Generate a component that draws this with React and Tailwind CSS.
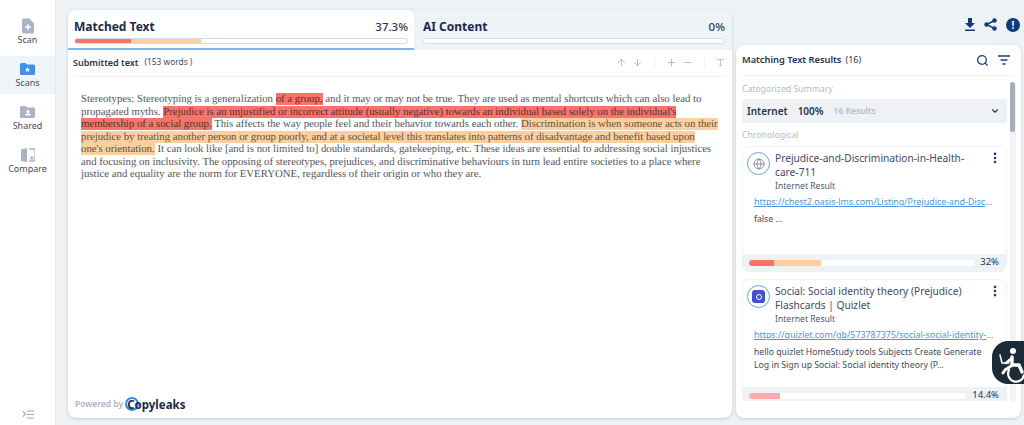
import React from "react";
import { Search, ChevronDown, ArrowUp, ArrowDown, Plus, Minus, Type, EllipsisVertical, Globe } from "lucide-react";

const Nav = ({ label, active, children }) => (
  <div className={`h-[38px] flex flex-col items-center justify-center ${active ? "bg-[#eff4f8]" : ""}`}>
    <div className="h-[16px] flex items-center justify-center">{children}</div>
    <span className="text-[9px] leading-[12px] text-[#3f4a63]">{label}</span>
  </div>
);

const Doc = () => (
  <svg width="12" height="16" viewBox="0 0 13 16"><path d="M0 2a2 2 0 0 1 2-2h6l5 5v9a2 2 0 0 1-2 2H2a2 2 0 0 1-2-2z" fill="#aab4c6" /><path d="M6.500 6v6M3.500 9h6" stroke="#fff" strokeWidth="1.600" /></svg>
);
const Folder = ({ color, children }) => (
  <svg width="15" height="12" viewBox="0 0 15 12"><path d="M0 1.500A1.500 1.500 0 0 1 1.500 0h4l1.500 1.500h6.500A1.500 1.500 0 0 1 15 3v7.500a1.500 1.500 0 0 1-1.500 1.500h-12A1.500 1.500 0 0 1 0 10.500z" fill={color} />{children}</svg>
);
const Compare = () => (
  <svg width="14" height="16" viewBox="0 0 14 16"><path d="M0 2.500 6 1v14l-6-1z" fill="#aab4c6" /><path d="M8 2h5a1 1 0 0 1 1 1v10a1 1 0 0 1-1 1H8" fill="none" stroke="#aab4c6" strokeWidth="1.300" /><path d="M8.500 12.500l2.500-4 2 4z" fill="#aab4c6" /></svg>
);

const Bar = ({ red = 0, orange = 0, pink = 0 }) => (
  <div className="flex-1 h-[6px] rounded-full bg-white overflow-hidden flex">
    <div className="bg-[#f8736a]" style={{ width: `${red}%` }} />
    <div className="bg-[#fdcf9f]" style={{ width: `${orange}%` }} />
    <div className="bg-[#fcabab]" style={{ width: `${pink}%` }} />
  </div>
);

const TabBar = ({ red = 0, orange = 0 }) => (
  <div className="h-[6px] rounded-full border border-[#d5dce6] bg-white overflow-hidden flex">
    <div className="bg-[#f8736a]" style={{ width: `${red}%` }} />
    <div className="bg-[#fdcf9f]" style={{ width: `${orange}%` }} />
  </div>
);

const Card = ({ icon, title, url, body, bar }) => (
  <div className="shrink-0 h-[126px] rounded-[7px] border border-[#eef2f5] flex flex-col overflow-hidden">
    <div className="flex-1 relative pl-[4px] pr-[2px] pt-[4px]">
      <div className="flex gap-[5px]">
        <div className="w-[23px] h-[23px] rounded-full border border-[#5ea3ea] flex items-center justify-center mt-[1px] shrink-0">{icon}</div>
        <div className="pr-[24px] pt-[1px]">
          <div className="text-[10.200px] leading-[13.500px] text-[#3f4a63]">{title}</div>
          <div className="text-[8.600px] leading-[14px] text-[#4d5870]">Internet Result</div>
        </div>
      </div>
      <EllipsisVertical size={14} strokeWidth={2.600} className="absolute right-[4px] top-[4px] text-[#1c3d7c]" />
      <div className="mt-[2px] ml-[7px] mr-[9px] text-[8.900px] leading-[13px] text-[#4b95e6] underline truncate">{url}</div>
      <div className="mt-[5px] ml-[7px] mr-[12px] text-[8.700px] leading-[12.500px] text-[#3f4a5c]">{body}</div>
    </div>
    {bar}
  </div>
);

export default function App() {
  return (
    <div className="w-[1024px] h-[425px] overflow-hidden flex bg-[#eef2f5] relative" style={{ fontFamily: '"Noto Sans", Inter, sans-serif' }}>
      <aside className="w-[56px] shrink-0 bg-white flex flex-col pt-[12px] border-r border-[#e5eaee]">
        <div className="h-px" />
        <Nav label="Scan"><Doc /></Nav>
        <div className="h-[5px]" />
        <Nav label="Scans" active>
          <Folder color="#3d91ec"><path d="M7.500 4l.8 1.700 1.800.2-1.300 1.200.4 1.800-1.700-.9-1.700.9.4-1.800-1.300-1.200 1.800-.2z" fill="#fff" /></Folder>
        </Nav>
        <div className="h-[5px]" />
        <Nav label="Shared">
          <Folder color="#aab4c6"><circle cx="8" cy="5.500" r="1.500" fill="#fff" /><path d="M5 9.500c0-3 6-3 6 0z" fill="#fff" /></Folder>
        </Nav>
        <div className="h-[5px]" />
        <Nav label="Compare"><Compare /></Nav>
        <div className="mt-auto mb-[6px] flex justify-center text-[#9aa5b8]">
          <svg width="12" height="9" viewBox="0 0 12 9" fill="none" stroke="currentColor" strokeWidth="1.100"><path d="M1 1.500 3.500 4 1 6.500M5 1h7M5 4.500h7M5 8h7" /></svg>
        </div>
      </aside>

      <main className="w-[664px] shrink-0 ml-[12px] mt-[10px] mb-[7px] rounded-[8px] bg-white shadow-[0_1px_3px_rgba(120,135,150,0.35)] flex flex-col overflow-hidden">
        <div className="flex h-[40px] shrink-0 bg-[#eef3f6]">
          <div className="w-[346px] bg-white rounded-t-[8px] border-b-2 border-[#7db7ec] px-[6px] pt-[9px]">
            <div className="flex justify-between items-center h-[15px] text-[#1b2a4a]">
              <span className="text-[12px] font-bold">Matched Text</span>
              <span className="text-[11.500px] font-medium text-[#2b3a58]">37.3%</span>
            </div>
            <div className="mt-[4px]"><TabBar red={16.900} orange={21} /></div>
          </div>
          <div className="flex-1 px-[9px] pt-[9px] pr-[7px]">
            <div className="flex justify-between items-center h-[15px] text-[#1b2a4a]">
              <span className="text-[12px] font-bold">AI Content</span>
              <span className="text-[11.500px] font-medium text-[#2b3a58]">0%</span>
            </div>
            <div className="mt-[4px]"><TabBar /></div>
          </div>
        </div>

        <div className="h-[27px] shrink-0 ml-[5px] mr-[6px] flex items-center border-b border-[#f1f4f7] pb-[1px]">
          <span className="text-[9px] font-semibold text-[#27334f]">Submitted text</span>
          <span className="text-[8.400px] text-[#3f4a63] ml-[6px]">(153 words )</span>
          <div className="ml-auto flex items-center text-[#aeb7c6]">
            <ArrowUp size={11} />
            <ArrowDown size={11} className="ml-[5px]" />
            <span className="w-px h-[11px] bg-[#eef1f4] ml-[11px]" />
            <Plus size={11} className="ml-[11px]" />
            <Minus size={11} className="ml-[5px]" />
            <span className="w-px h-[11px] bg-[#eef1f4] ml-[11px]" />
            <Type size={9} className="ml-[11px] mr-[1px]" />
          </div>
        </div>

        <div className="pl-[13px] pr-[13.500px] pt-[16px] text-[10.780px] leading-[12.500px] text-[#50555c] [text-rendering:geometricPrecision]" style={{ fontFamily: '"Liberation Serif", serif' }}>
          Stereotypes: Stereotyping is a generalization <span className="bg-[#f8736a] text-[#5a2f2c]">of a group,</span> and it may or may not be true. They are used as mental shortcuts which can also lead to propagated myths. <span className="bg-[#f8736a] text-[#5a2f2c]">Prejudice is an unjustified or incorrect attitude (usually negative) towards an individual based solely on the individual's membership of a social group.</span> This affects the way people feel and their behavior towards each other. <span className="bg-[#fdcf9f] text-[#5c5040]">Discrimination is when someone acts on their prejudice by treating another person or group poorly, and at a societal level this translates into patterns of disadvantage and benefit based upon one's orientation.</span> It can look like [and is not limited to] double standards, gatekeeping, etc. These ideas are essential to addressing social injustices and focusing on inclusivity. The opposing of stereotypes, prejudices, and discriminative behaviours in turn lead entire societies to a place where justice and equality are the norm for EVERYONE, regardless of their origin or who they are.
        </div>

        <div className="mt-auto mb-[5px] ml-[7px] flex items-center">
          <span className="text-[8.500px] font-semibold text-[#aab4c6]">Powered by</span>
          <span className="relative ml-[2px] text-[11.500px] font-bold text-[#1b2a4a] pl-[2px]">
            <span className="absolute left-0 top-[1px] w-[14px] h-[14px] rounded-full border-[2.500px] border-[#2f8dee]" />
            <span className="relative">Copyleaks</span>
          </span>
        </div>
      </main>

      <div className="w-[285px] shrink-0 ml-[4px] flex flex-col">
        <div className="h-[45px] shrink-0 flex items-start justify-end pt-[18px] pr-[1px] text-[#0f3a80]">
          <svg width="12" height="13" viewBox="0 0 12 13" fill="currentColor"><path d="M4 0h4v5h3L6 10 1 5h3zM1 11.500h10V13H1z" /></svg>
          <svg width="13" height="13" viewBox="0 0 13 13" className="ml-[8px]"><path d="M10.500 2.500 2.500 6.500l8 4" fill="none" stroke="currentColor" strokeWidth="1.400" /><circle cx="10.500" cy="2.500" r="2.200" fill="currentColor" /><circle cx="2.500" cy="6.500" r="2.200" fill="currentColor" /><circle cx="10.500" cy="10.500" r="2.200" fill="currentColor" /></svg>
          <span className="ml-[9px] w-[14px] h-[14px] rounded-full bg-[#0f3a80] text-white text-[10px] font-bold flex items-center justify-center">!</span>
        </div>
        <section className="h-[373px] mb-[7px] rounded-[8px] bg-white shadow-[0_1px_3px_rgba(120,135,150,0.35)] px-[6px] flex flex-col overflow-hidden relative">
          <div className="h-[31px] shrink-0 flex items-center border-b border-[#f1f4f7] text-[#27334f]">
            <span className="text-[9.300px] font-semibold">Matching Text Results</span>
            <span className="text-[9px] ml-[4px]">(16)</span>
            <Search size={13} strokeWidth={2.400} className="ml-auto text-[#1c3d7c]" />
            <svg width="14" height="10" viewBox="0 0 14 10" fill="none" stroke="#1c3d7c" strokeWidth="1.300" className="ml-[8px] mr-[4px]"><path d="M1 1h12M3.500 5h7M5.500 9h3" /></svg>
          </div>
          <div className="flex-1 min-h-0 flex gap-[3px]">
            <div className="w-[265px] shrink-0 flex flex-col">
              <div className="text-[8.700px] leading-[12px] text-[#b3bcc9] mt-[7px]">Categorized Summary</div>
              <div className="h-[24px] shrink-0 mt-[4px] rounded-[3px] bg-[#eef2f5] flex items-center pl-[5px] pr-[7px]">
                <span className="text-[10px] font-semibold text-[#27334f]">Internet</span>
                <span className="text-[10px] font-semibold text-[#27334f] ml-[10px]">100%</span>
                <span className="text-[8.500px] font-semibold text-[#b3bcc9] ml-[10px]">16 Results</span>
                <ChevronDown size={10} strokeWidth={2.600} className="ml-auto text-[#27334f]" />
              </div>
              <div className="text-[8.700px] leading-[12px] text-[#b3bcc9] mt-[6px]">Chronological</div>
              <div className="mt-[5px] flex flex-col gap-[7px] h-[255px] overflow-hidden">
                <Card
                  icon={<Globe size={12} className="text-[#8a93a3]" />}
                  title="Prejudice-and-Discrimination-in-Health-care-711"
                  url="https://chest2.oasis-lms.com/Listing/Prejudice-and-Discrimination-in-Health"
                  body="false ..."
                  bar={
                    <div className="h-[17px] shrink-0 bg-[#eef2f5] flex items-center pl-[6px] pr-[7px]">
                      <Bar red={11} orange={21} />
                      <span className="ml-[6px] text-[9.500px] text-[#27334f]">32%</span>
                    </div>
                  }
                />
                <Card
                  icon={<span className="w-[13px] h-[13px] rounded-[3px] bg-[#3f51d6] flex items-center justify-center"><span className="w-[6px] h-[6px] rounded-full border-[1.500px] border-white" /></span>}
                  title="Social: Social identity theory (Prejudice) Flashcards | Quizlet"
                  url="https://quizlet.com/gb/573787375/social-social-identity-theory-prejudice"
                  body="hello quizlet HomeStudy tools Subjects Create Generate Log in Sign up Social: Social identity theory (P..."
                  bar={
                    <div className="h-[17px] shrink-0 bg-[#eef2f5] flex items-center pl-[6px] pr-[7px]">
                      <Bar pink={14.400} />
                      <span className="ml-[6px] text-[9.500px] text-[#27334f]">14.4%</span>
                    </div>
                  }
                />
              </div>
            </div>
            <div className="w-[6px] h-[320px] mt-[6px] rounded-full bg-[#f1f4f7] shrink-0">
              <div className="w-[5px] h-[50px] rounded-full bg-[#a3adbc]" />
            </div>
          </div>
        </section>
      </div>

      <div className="absolute right-0 top-[341px] w-[32px] h-[43px] rounded-l-[16px] bg-[#1b2b38] text-white">
        <svg width="32" height="43" viewBox="0 0 32 43" fill="none" stroke="currentColor" strokeLinecap="round" strokeLinejoin="round">
          <circle cx="21" cy="10" r="3" fill="currentColor" stroke="none" />
          <path d="M20 16v8h7l3 7" strokeWidth="3.400" />
          <path d="M20 17l-6 5" strokeWidth="2.600" />
          <path d="M8 14l2 8h7" strokeWidth="1.500" />
          <path d="M19 25l-6 4-2 3" strokeWidth="3" />
          <path d="M17 29a8 8 0 1 0 15 5" strokeWidth="2.200" />
        </svg>
      </div>
    </div>
  );
}
